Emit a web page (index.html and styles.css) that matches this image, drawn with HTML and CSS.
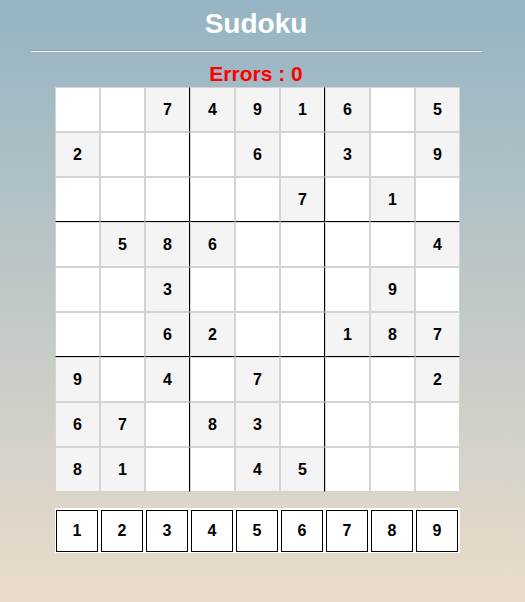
FILE: index.html
```html
<!DOCTYPE html>
<html lang="en">
<head>
<meta charset="utf-8">
<title>Sudoku</title>
<link rel="stylesheet" href="styles.css">
</head>
<body>
<div class="page">
  <h1 class="title">Sudoku</h1>
  <hr class="rule">
  <h2 class="errors">Errors : 0</h2>
  <div class="board">
    <div class="tile"></div><div class="tile"></div><div class="tile start vline">7</div><div class="tile start">4</div><div class="tile start">9</div><div class="tile start vline">1</div><div class="tile start">6</div><div class="tile"></div><div class="tile start">5</div>
    <div class="tile start">2</div><div class="tile"></div><div class="tile vline"></div><div class="tile"></div><div class="tile start">6</div><div class="tile vline"></div><div class="tile start">3</div><div class="tile"></div><div class="tile start">9</div>
    <div class="tile hline"></div><div class="tile hline"></div><div class="tile hline vline"></div><div class="tile hline"></div><div class="tile hline"></div><div class="tile start hline vline">7</div><div class="tile hline"></div><div class="tile start hline">1</div><div class="tile hline"></div>
    <div class="tile"></div><div class="tile start">5</div><div class="tile start vline">8</div><div class="tile start">6</div><div class="tile"></div><div class="tile vline"></div><div class="tile"></div><div class="tile"></div><div class="tile start">4</div>
    <div class="tile"></div><div class="tile"></div><div class="tile start vline">3</div><div class="tile"></div><div class="tile"></div><div class="tile vline"></div><div class="tile"></div><div class="tile start">9</div><div class="tile"></div>
    <div class="tile hline"></div><div class="tile hline"></div><div class="tile start hline vline">6</div><div class="tile start hline">2</div><div class="tile hline"></div><div class="tile hline vline"></div><div class="tile start hline">1</div><div class="tile start hline">8</div><div class="tile start hline">7</div>
    <div class="tile start">9</div><div class="tile"></div><div class="tile start vline">4</div><div class="tile"></div><div class="tile start">7</div><div class="tile vline"></div><div class="tile"></div><div class="tile"></div><div class="tile start">2</div>
    <div class="tile start">6</div><div class="tile start">7</div><div class="tile vline"></div><div class="tile start">8</div><div class="tile start">3</div><div class="tile vline"></div><div class="tile"></div><div class="tile"></div><div class="tile"></div>
    <div class="tile start">8</div><div class="tile start">1</div><div class="tile vline"></div><div class="tile"></div><div class="tile start">4</div><div class="tile start vline">5</div><div class="tile"></div><div class="tile"></div><div class="tile"></div>
  </div>
  <div class="digits">
    <div class="number">1</div><div class="number">2</div><div class="number">3</div><div class="number">4</div><div class="number">5</div><div class="number">6</div><div class="number">7</div><div class="number">8</div><div class="number">9</div>
  </div>
</div>
</body>
</html>
```
FILE: styles.css
```css
html {
  min-height: 100%;
}
body {
  margin: 0;
  min-height: 602px;
  background: linear-gradient(to bottom, #95b4c3 0%, #eadcca 100%);
  font-family: "Liberation Sans", Arial, sans-serif;
}
.page {
  width: 512px;
  padding-top: 8px;
}
.title {
  margin: 0;
  font-size: 28px;
  line-height: 32px;
  font-weight: bold;
  color: #ffffff;
  text-align: center;
}
.rule {
  width: 451px;
  margin: 10px 0 0 31px;
  height: 0;
  border: 0;
  border-top: 1px solid #9c9c9c;
  border-bottom: 1px solid #f2f2f2;
}
.errors {
  margin: 9px 0 0 0;
  font-size: 21px;
  line-height: 26px;
  font-weight: bold;
  color: #ff0000;
  text-align: center;
}
.board {
  margin: 0 0 0 55px;
  width: 405px;
  display: grid;
  grid-template-columns: repeat(9, 45px);
  grid-auto-rows: 45px;
}
.tile {
  box-sizing: border-box;
  border: 1px solid #d3d3d3;
  background: #ffffff;
  display: flex;
  align-items: center;
  justify-content: center;
  font-size: 16px;
  font-weight: bold;
  color: #000000;
}
.start {
  background: #f4f4f4;
}
.hline {
  border-bottom-color: #000000;
}
.vline {
  border-right-color: #000000;
}
.digits {
  margin: 16px 0 0 55px;
  width: 405px;
  height: 45px;
  background: #ffffff;
  display: grid;
  grid-template-columns: repeat(9, 45px);
}
.number {
  box-sizing: border-box;
  width: 42px;
  height: 42px;
  margin: 2px 0 0 1px;
  border: 1px solid #000000;
  display: flex;
  align-items: center;
  justify-content: center;
  font-size: 16px;
  font-weight: bold;
  color: #000000;
}
```
